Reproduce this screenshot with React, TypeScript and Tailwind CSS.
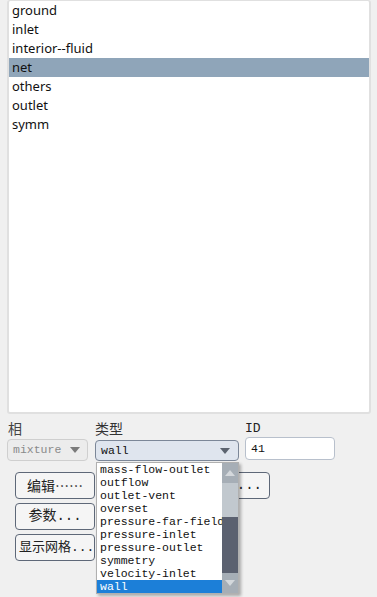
const zones = ['ground', 'inlet', 'interior--fluid', 'net', 'others', 'outlet', 'symm'];

const types = [
  'mass-flow-outlet',
  'outflow',
  'outlet-vent',
  'overset',
  'pressure-far-field',
  'pressure-inlet',
  'pressure-outlet',
  'symmetry',
  'velocity-inlet',
  'wall',
];

const mono = "font-['NSimSun','Liberation_Mono','Noto_Sans_CJK_SC',monospace]";
const cjk = "font-['Noto_Sans_CJK_SC','Noto_Sans',sans-serif]";
const btn = `h-[27px] bg-[#f5f5f5] border border-[#5e6878] rounded-[4px] text-[#222] whitespace-nowrap`;

function Arrow({ color }: { color: string }) {
  return (
    <svg width="10" height="6" viewBox="0 0 10 6">
      <path d="M0 0 L10 0 L5 6 Z" fill={color} />
    </svg>
  );
}

export default function App() {
  return (
    <div className="relative w-[377px] h-[597px] overflow-hidden bg-[#f0f0f0]">
      {/* zone list */}
      <div className="ml-[7px] w-[364px] h-[414px] bg-white border-2 border-t border-[#e0e0e0] rounded-[3px]">
        {zones.map((z) => (
          <div
            key={z}
            className={
              "h-[19px] pl-[3px] flex items-center text-[13px] text-[#111] font-['Noto_Sans',sans-serif] " +
              (z === 'net' ? 'bg-[#8fa5b9]' : '')
            }
          >
            {z}
          </div>
        ))}
      </div>

      {/* labels + controls */}
      <div className="flex mt-[6px] ml-[7px]">
        <div className="flex flex-col w-[81px]">
          <span className={`h-[17px] pl-[1px] text-[14px] leading-[17px] text-[#444] ${cjk}`}>相</span>
          <div className="mt-[2px] h-[22px] flex items-center justify-between pl-[5px] pr-[7px] bg-[#ececec] border border-[#cfcfcf] rounded-[4px]">
            <span className={`text-[11.5px] text-[#8a8a8a] ${mono}`}>mixture</span>
            <Arrow color="#7a7a7a" />
          </div>
        </div>
        <div className="flex flex-col w-[144px] ml-[7px]">
          <span className={`h-[17px] text-[14px] leading-[17px] text-[#333] ${cjk}`}>类型</span>
          <div className="mt-[3px] h-[21px] flex items-center justify-between pl-[5px] pr-[8px] bg-[#dfe5ee] border border-[#7c8798] rounded-[4px]">
            <span className={`text-[11.5px] text-[#111] ${mono}`}>wall</span>
            <Arrow color="#5c6470" />
          </div>
        </div>
        <div className="flex flex-col w-[90px] ml-[6px]">
          <span className={`h-[17px] text-[13px] leading-[17px] text-[#222] ${mono}`}>ID</span>
          <div className="h-[23px] flex items-center pl-[5px] bg-white border border-[#b8c0cc] rounded-[4px]">
            <span className={`text-[11.5px] text-[#111] ${mono}`}>41</span>
          </div>
        </div>
      </div>

      {/* buttons */}
      <div className="flex mt-[11px] ml-[15px]">
        <div className="flex flex-col gap-[4px] w-[80px]">
          <button className={`${btn} text-[14px] ${cjk}`}>编辑……</button>
          <button className={`${btn} text-[14px] ${mono}`}>参数...</button>
          <div className={`${btn} text-[13px] ${mono} flex items-center pl-[3px]`}>
            <span>显示网格...</span>
          </div>
        </div>
        <div className="ml-[95px]">
          <button className={`${btn} text-[14px] ${mono} w-[80px] flex items-center justify-end pr-[7px]`}>复制...</button>
        </div>
      </div>

      {/* open dropdown popup */}
      <div className="absolute left-[96px] top-[462px] w-[143px] h-[132px] flex bg-white border border-[#b0b0b0] shadow-[2px_2px_3px_rgba(0,0,0,0.3)]">
        <div className="flex-1 flex flex-col overflow-hidden">
          {types.map((t) => (
            <div
              key={t}
              className={
                `h-[13px] pl-[3px] flex items-center whitespace-nowrap text-[11.5px] leading-[13px] ${mono} ` +
                (t === 'wall' ? 'bg-[#1c7fd8] text-white' : 'text-[#111]')
              }
            >
              {t}
            </div>
          ))}
        </div>
        <div className="w-[16px] flex flex-col">
          <div className="h-[20px] flex items-center justify-center bg-[#a6aeb6]">
            <svg width="10" height="6" viewBox="0 0 10 6">
              <path d="M0 6 L10 6 L5 0 Z" fill="#d4d8dc" />
            </svg>
          </div>
          <div className="h-[34px] bg-[#c1c8ce]" />
          <div className="h-[56px] bg-[#5b6170]" />
          <div className="flex-1 flex items-center justify-center bg-[#a6aeb6]">
            <svg width="10" height="6" viewBox="0 0 10 6">
              <path d="M0 0 L10 0 L5 6 Z" fill="#d4d8dc" />
            </svg>
          </div>
        </div>
      </div>
    </div>
  );
}
